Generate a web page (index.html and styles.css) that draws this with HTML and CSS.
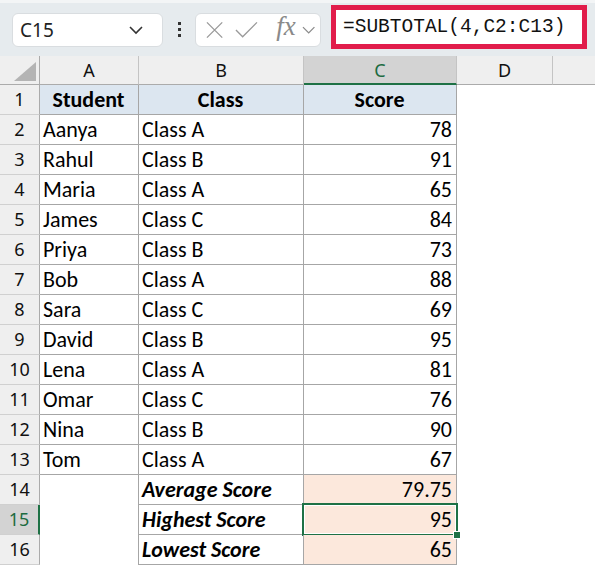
FILE: index.html
```html
<html>

<head>
  <link rel="stylesheet" href="styles.css">
</head>

<body>
  <div id="app">
    <div class="toolbar">
      <div class="namebox">
        <span>C15</span>
        <svg class="chev" width="16" height="10" viewBox="0 0 16 10"><path d="M2 2 L8 8 L14 2" fill="none" stroke="#333" stroke-width="1.6"/></svg>
      </div>
      <div class="dots"><i></i><i></i><i></i></div>
      <div class="fxbox">
        <svg width="18" height="18" viewBox="0 0 18 18"><path d="M1 1 L17 17 M17 1 L1 17" stroke="#9a9a9a" stroke-width="1.4"/></svg>
        <svg width="24" height="20" viewBox="0 0 24 20"><path d="M1 10 L8 17 L23 2" fill="none" stroke="#9a9a9a" stroke-width="1.4"/></svg>
        <span class="fx">fx</span>
        <svg width="14" height="10" viewBox="0 0 14 10"><path d="M1 2 L7 8 L13 2" fill="none" stroke="#8a8a8a" stroke-width="1.3"/></svg>
      </div>
      <div class="formula">=SUBTOTAL(4,C2:C13)</div>
    </div>

    <div class="sheet">
      <div class="corner"><svg width="22" height="19" viewBox="0 0 22 19"><path d="M22 0 L22 19 L0 19 Z" fill="#b4b4b4"/></svg></div>
      <div class="colhead">A</div>
      <div class="colhead">B</div>
      <div class="colhead active">C</div>
      <div class="colhead">D</div>
      <div class="colhead last"></div>

      <div class="rowhead">1</div>
      <div class="cell head">Student</div>
      <div class="cell head">Class</div>
      <div class="cell head">Score</div>
      <div class="blank"></div>
      <div class="blank"></div>
    </div>
  </div>
  <script>
    var rows = [
      ['Aanya', 'Class A', 78], ['Rahul', 'Class B', 91], ['Maria', 'Class A', 65],
      ['James', 'Class C', 84], ['Priya', 'Class B', 73], ['Bob', 'Class A', 88],
      ['Sara', 'Class C', 69], ['David', 'Class B', 95], ['Lena', 'Class A', 81],
      ['Omar', 'Class C', 76], ['Nina', 'Class B', 90], ['Tom', 'Class A', 67],
      ['', 'Average Score', '79.75'], ['', 'Highest Score', 95], ['', 'Lowest Score', 65]
    ]
    var sheet = document.querySelector('.sheet')
    var add = function (cls, text) {
      var d = document.createElement('div')
      d.className = cls
      d.textContent = text
      sheet.appendChild(d)
    }
    rows.forEach(function (r, i) {
      var n = i + 2
      var summary = n >= 14
      add('rowhead' + (n === 15 ? ' active' : ''), n)
      add(summary ? 'cell empty' : 'cell', r[0])
      add(summary ? 'cell label' : 'cell', r[1])
      add('cell num' + (summary ? ' calc' : '') + (n === 15 ? ' selected' : ''), r[2])
      add('blank', '')
      add('blank', '')
    })
  </script>
</body>

</html>
```

FILE: styles.css
```css
body {
  margin: 0;
  padding: 0;
  background: #fff;
  font-family: 'Noto Sans', 'Open Sans', sans-serif;
}

#app {
  width: 595px;
  height: 566px;
  overflow: hidden;
}

.toolbar {
  height: 56px;
  box-sizing: border-box;
  background: #e6ebee;
  border-top: 3px solid #f3f5f6;
  display: flex;
  align-items: center;
  padding: 0 8px 0 12px;
}

.namebox {
  width: 151px;
  height: 34px;
  box-sizing: border-box;
  background: #fff;
  border: 1px solid #d9dde0;
  border-radius: 6px;
  display: flex;
  align-items: center;
  justify-content: space-between;
  padding: 0 18px 0 7px;
  font-size: 19px;
  color: #222;
}

.dots {
  width: 32px;
  display: flex;
  flex-direction: column;
  align-items: center;
  gap: 3px;
}

.dots i {
  width: 3px;
  height: 3px;
  background: #333;
}

.fxbox {
  width: 126px;
  height: 34px;
  box-sizing: border-box;
  background: #fff;
  border: 1px solid #d9dde0;
  border-radius: 6px;
  display: flex;
  align-items: center;
  gap: 12px;
  padding: 0 5px 0 10px;
}

.fx {
  font-family: 'Liberation Serif', serif;
  font-style: italic;
  font-size: 27px;
  color: #8a8a8a;
  margin-top: -6px;
  margin-left: 6px;
  margin-right: -6px;
}

.formula {
  margin-left: 10px;
  width: 256px;
  height: 44px;
  margin-top: -5px;
  box-sizing: border-box;
  border: 5px solid #e11d4b;
  background: #fff;
  font-family: 'Liberation Mono', monospace;
  font-size: 19.5px;
  color: #111;
  display: flex;
  align-items: center;
  padding-left: 7px;
}

.sheet {
  display: grid;
  grid-template-columns: 40px 99px 165px 153px 96px 1fr;
  grid-template-rows: 29px;
  grid-auto-rows: 30px;
}

.sheet > div {
  box-sizing: border-box;
}

.corner {
  background: #efefef;
  border-right: 1px solid #ababab;
  border-bottom: 1px solid #ababab;
  display: flex;
  align-items: flex-end;
  justify-content: flex-end;
  padding: 0 3px 3px 0;
}

.colhead {
  background: #efefef;
  border-right: 1px solid #c4c4c4;
  border-bottom: 1px solid #ababab;
  text-align: center;
  font-size: 18px;
  line-height: 28px;
  color: #111;
}

.colhead.last {
  border-right: none;
}

.colhead.active {
  background: #d3d3d3;
  color: #1d6b41;
  border-bottom: 2px solid #1e7145;
}

.rowhead {
  background: #efefef;
  border-right: 1px solid #ababab;
  border-bottom: 1px solid #d0d0d0;
  text-align: center;
  font-size: 18px;
  line-height: 29px;
  color: #111;
}

.rowhead.active {
  background: #d3d3d3;
  color: #1d6b41;
  border-right: 2px solid #1e7145;
}

.cell {
  border-right: 1px solid #a6a6a6;
  border-bottom: 1px solid #a6a6a6;
  font-family: 'Carlito', 'Lato', sans-serif;
  font-size: 22px;
  line-height: 30px;
  padding: 0 4px 0 3px;
  color: #000;
  white-space: nowrap;
  position: relative;
}

.cell.head {
  background: #dce6f0;
  font-weight: bold;
  text-align: center;
}

.cell.empty {
  border-bottom: none;
}

.cell.label {
  font-weight: bold;
  font-style: italic;
}

.cell.num {
  text-align: right;
}

.cell.calc {
  background: #fce8dc;
}

.cell.selected::after {
  content: '';
  position: absolute;
  left: -2px;
  top: -2px;
  right: -2px;
  bottom: -2px;
  border: 2px solid #1e7145;
  box-shadow: inset 0 0 0 1px #fff;
}

.cell.selected::before {
  content: '';
  position: absolute;
  right: -5px;
  bottom: -5px;
  width: 6px;
  height: 6px;
  background: #1e7145;
  border: 1px solid #fff;
  z-index: 2;
}

.blank {
  background: #fff;
}
```
